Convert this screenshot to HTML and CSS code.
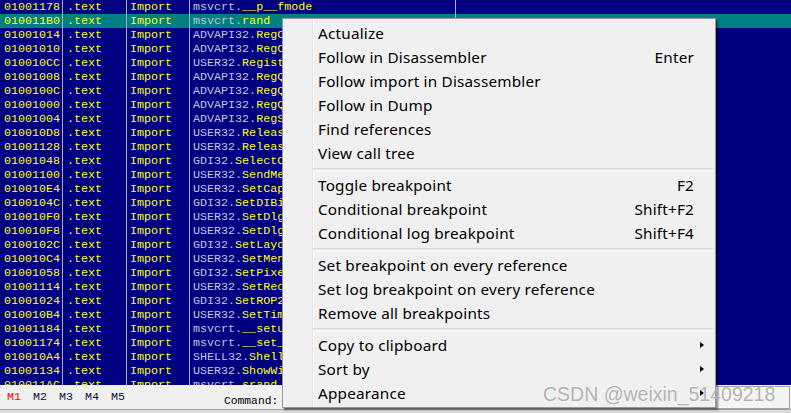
FILE: index.html
```html
<!DOCTYPE html>
<html>
<head>
<meta charset="utf-8">
<link rel="stylesheet" href="styles.css">
</head>
<body>
<div class="app">
  <div class="table">
    <div class="row"><div class="c a">01001178</div><div class="c s">.text</div><div class="c t">Import</div><div class="c n"><span class="m">msvcrt.</span>__p__fmode</div><div class="c e"></div></div>
    <div class="row sel"><div class="c a">010011B0</div><div class="c s">.text</div><div class="c t">Import</div><div class="c n"><span class="m">msvcrt.</span>rand</div><div class="c e"></div></div>
    <div class="row"><div class="c a">01001014</div><div class="c s">.text</div><div class="c t">Import</div><div class="c n"><span class="m">ADVAPI32.</span>RegCloseKey</div><div class="c e"></div></div>
    <div class="row"><div class="c a">01001010</div><div class="c s">.text</div><div class="c t">Import</div><div class="c n"><span class="m">ADVAPI32.</span>RegCreateKeyW</div><div class="c e"></div></div>
    <div class="row"><div class="c a">010010CC</div><div class="c s">.text</div><div class="c t">Import</div><div class="c n"><span class="m">USER32.</span>RegisterClassW</div><div class="c e"></div></div>
    <div class="row"><div class="c a">01001008</div><div class="c s">.text</div><div class="c t">Import</div><div class="c n"><span class="m">ADVAPI32.</span>RegQueryInfoKeyW</div><div class="c e"></div></div>
    <div class="row"><div class="c a">0100100C</div><div class="c s">.text</div><div class="c t">Import</div><div class="c n"><span class="m">ADVAPI32.</span>RegQueryValueExW</div><div class="c e"></div></div>
    <div class="row"><div class="c a">01001000</div><div class="c s">.text</div><div class="c t">Import</div><div class="c n"><span class="m">ADVAPI32.</span>RegQueryValueW</div><div class="c e"></div></div>
    <div class="row"><div class="c a">01001004</div><div class="c s">.text</div><div class="c t">Import</div><div class="c n"><span class="m">ADVAPI32.</span>RegSetValueExW</div><div class="c e"></div></div>
    <div class="row"><div class="c a">010010D8</div><div class="c s">.text</div><div class="c t">Import</div><div class="c n"><span class="m">USER32.</span>ReleaseCapture</div><div class="c e"></div></div>
    <div class="row"><div class="c a">01001128</div><div class="c s">.text</div><div class="c t">Import</div><div class="c n"><span class="m">USER32.</span>ReleaseDC</div><div class="c e"></div></div>
    <div class="row"><div class="c a">01001048</div><div class="c s">.text</div><div class="c t">Import</div><div class="c n"><span class="m">GDI32.</span>SelectObject</div><div class="c e"></div></div>
    <div class="row"><div class="c a">01001100</div><div class="c s">.text</div><div class="c t">Import</div><div class="c n"><span class="m">USER32.</span>SendMessageW</div><div class="c e"></div></div>
    <div class="row"><div class="c a">010010E4</div><div class="c s">.text</div><div class="c t">Import</div><div class="c n"><span class="m">USER32.</span>SetCapture</div><div class="c e"></div></div>
    <div class="row"><div class="c a">0100104C</div><div class="c s">.text</div><div class="c t">Import</div><div class="c n"><span class="m">GDI32.</span>SetDIBitsToDevice</div><div class="c e"></div></div>
    <div class="row"><div class="c a">010010F0</div><div class="c s">.text</div><div class="c t">Import</div><div class="c n"><span class="m">USER32.</span>SetDlgItemInt</div><div class="c e"></div></div>
    <div class="row"><div class="c a">010010F8</div><div class="c s">.text</div><div class="c t">Import</div><div class="c n"><span class="m">USER32.</span>SetDlgItemTextW</div><div class="c e"></div></div>
    <div class="row"><div class="c a">0100102C</div><div class="c s">.text</div><div class="c t">Import</div><div class="c n"><span class="m">GDI32.</span>SetLayout</div><div class="c e"></div></div>
    <div class="row"><div class="c a">010010C4</div><div class="c s">.text</div><div class="c t">Import</div><div class="c n"><span class="m">USER32.</span>SetMenu</div><div class="c e"></div></div>
    <div class="row"><div class="c a">01001058</div><div class="c s">.text</div><div class="c t">Import</div><div class="c n"><span class="m">GDI32.</span>SetPixel</div><div class="c e"></div></div>
    <div class="row"><div class="c a">01001114</div><div class="c s">.text</div><div class="c t">Import</div><div class="c n"><span class="m">USER32.</span>SetRect</div><div class="c e"></div></div>
    <div class="row"><div class="c a">01001024</div><div class="c s">.text</div><div class="c t">Import</div><div class="c n"><span class="m">GDI32.</span>SetROP2</div><div class="c e"></div></div>
    <div class="row"><div class="c a">010010B4</div><div class="c s">.text</div><div class="c t">Import</div><div class="c n"><span class="m">USER32.</span>SetTimer</div><div class="c e"></div></div>
    <div class="row"><div class="c a">01001184</div><div class="c s">.text</div><div class="c t">Import</div><div class="c n"><span class="m">msvcrt.</span>__setusermatherr</div><div class="c e"></div></div>
    <div class="row"><div class="c a">01001174</div><div class="c s">.text</div><div class="c t">Import</div><div class="c n"><span class="m">msvcrt.</span>__set_app_type</div><div class="c e"></div></div>
    <div class="row"><div class="c a">010010A4</div><div class="c s">.text</div><div class="c t">Import</div><div class="c n"><span class="m">SHELL32.</span>ShellAboutW</div><div class="c e"></div></div>
    <div class="row"><div class="c a">01001134</div><div class="c s">.text</div><div class="c t">Import</div><div class="c n"><span class="m">USER32.</span>ShowWindow</div><div class="c e"></div></div>
    <div class="row"><div class="c a">010011AC</div><div class="c s">.text</div><div class="c t">Import</div><div class="c n"><span class="m">msvcrt.</span>srand</div><div class="c e"></div></div>
  </div>
  <div class="bottom">
    <div class="bar">
      <div class="tabs">
        <span class="tab active">M1</span>
        <span class="tab">M2</span>
        <span class="tab">M3</span>
        <span class="tab">M4</span>
        <span class="tab">M5</span>
      </div>
      <span class="cmd-label">Command:</span>
      <div class="cmd-input"></div>
    </div>
    <div class="status"></div>
  </div>
</div>

<div class="menu">
  <div class="item"><span class="label">Actualize</span></div>
  <div class="item"><span class="label">Follow in Disassembler</span><span class="key">Enter</span></div>
  <div class="item"><span class="label">Follow import in Disassembler</span></div>
  <div class="item"><span class="label">Follow in Dump</span></div>
  <div class="item"><span class="label">Find references</span></div>
  <div class="item"><span class="label">View call tree</span></div>
  <div class="sep"></div>
  <div class="item"><span class="label">Toggle breakpoint</span><span class="key">F2</span></div>
  <div class="item"><span class="label">Conditional breakpoint</span><span class="key">Shift+F2</span></div>
  <div class="item"><span class="label">Conditional log breakpoint</span><span class="key">Shift+F4</span></div>
  <div class="sep"></div>
  <div class="item"><span class="label">Set breakpoint on every reference</span></div>
  <div class="item"><span class="label">Set log breakpoint on every reference</span></div>
  <div class="item"><span class="label">Remove all breakpoints</span></div>
  <div class="sep"></div>
  <div class="item"><span class="label">Copy to clipboard</span><span class="sub"><i class="arrow"></i></span></div>
  <div class="item"><span class="label">Sort by</span><span class="sub"><i class="arrow"></i></span></div>
  <div class="item"><span class="label">Appearance</span><span class="sub"><i class="arrow"></i></span></div>
</div>

<div class="watermark">CSDN @weixin_51409218</div>
</body>
</html>
```
FILE: styles.css
```css
* { box-sizing: border-box; }
html, body { margin: 0; padding: 0; }
body {
  width: 791px;
  height: 413px;
  overflow: hidden;
  position: relative;
  background: #f0f0f0;
}
.app {
  display: flex;
  flex-direction: column;
  height: 413px;
}
.table {
  height: 385px;
  background: #000080;
  overflow: hidden;
  font-family: "Liberation Mono", monospace;
  font-size: 11.7px;
}
.row {
  display: grid;
  grid-template-columns: 63px 64px 63px 266px 1fr;
  height: 14px;
  line-height: 14px;
  color: #ffff20;
}
.row.sel { background: #008080; }
.c {
  border-right: 1px solid #a8a8c8;
  white-space: nowrap;
  overflow: hidden;
}
.c.a { padding-left: 4px; }
.c.s { padding-left: 4px; }
.c.t { padding-left: 3px; }
.c.n { padding-left: 3px; }
.c.e { border-right: none; }
.m { color: #c4c4dc; }

.bottom {
  height: 28px;
  display: flex;
  flex-direction: column;
}
.bar {
  height: 24px;
  display: flex;
  align-items: flex-start;
  font-family: "Liberation Mono", monospace;
  font-size: 11.7px;
}
.tabs {
  display: flex;
  padding-left: 7px;
  padding-top: 5px;
}
.tab {
  width: 26px;
  height: 14px;
  line-height: 14px;
  color: #101040;
}
.tab.active { color: #ff0000; }
.cmd-label {
  margin-left: 87px;
  padding-top: 9px;
  line-height: 14px;
  font-size: 11.3px;
  color: #000;
}
.cmd-input {
  margin-left: 6px;
  margin-top: 1px;
  width: 506px;
  height: 23px;
  border: 1px solid #a0a0a0;
  background: #f4f4f4;
}
.status {
  flex: 1;
  border-top: 1px solid #a0a0a0;
  background: #dcdcdc;
}

.menu {
  position: absolute;
  left: 282px;
  top: 18px;
  width: 434px;
  padding: 2px 0;
  border: 1px solid #979797;
  background: linear-gradient(to right, #f0f0f0 29px, #e2e3e3 29px, #e2e3e3 30px, #ffffff 30px, #ffffff 31px, #f0f0f0 31px);
  box-shadow: 2px 2px 2px rgba(0, 0, 0, 0.45);
  font-family: "Noto Sans", sans-serif;
  font-size: 15.3px;
  letter-spacing: 0.2px;
  color: #000;
}
.item {
  display: flex;
  align-items: center;
  height: 24px;
  padding-left: 35px;
  padding-right: 21px;
  white-space: nowrap;
}
.item .label { flex: 1; }
.item .key { text-align: right; }
.item .sub {
  width: 21px;
  margin-right: -21px;
  display: flex;
  align-items: center;
  padding-left: 6px;
}
.arrow {
  display: block;
  width: 0;
  height: 0;
  border-left: 4px solid #000;
  border-top: 3.5px solid transparent;
  border-bottom: 3.5px solid transparent;
}
.sep {
  height: 8px;
  margin-left: 30px;
  margin-right: 2px;
  padding-top: 3px;
}
.sep::before {
  content: "";
  display: block;
  height: 2px;
  border-top: 1px solid #d7d7d7;
  border-bottom: 1px solid #ffffff;
}

.watermark {
  position: absolute;
  left: 543px;
  top: 382px;
  font-family: "Liberation Sans", Arial, sans-serif;
  font-size: 19.5px;
  line-height: 24px;
  color: rgba(130, 130, 130, 0.62);
  text-shadow: 0 0 1px rgba(255, 255, 255, 0.9);
  white-space: nowrap;
}
```
